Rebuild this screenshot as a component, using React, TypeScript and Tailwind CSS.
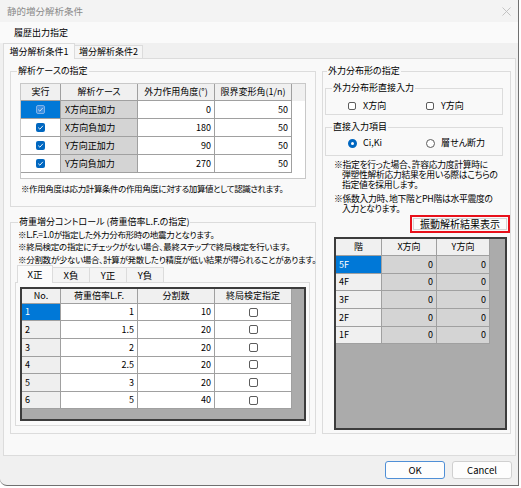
import React from "react";

const Check = ({ sel = false }: { sel?: boolean }) => (
  <div
    className={
      "w-[9px] h-[9px] rounded-[2px] flex items-center justify-center " +
      (sel ? "bg-[#3a8ee0] border border-[#7db3ea]" : "bg-[#0067c0]")
    }
  >
    <svg width="7" height="7" viewBox="0 0 7 7">
      <path d="M1.2 3.6 L2.9 5.2 L5.9 1.8" fill="none" stroke={sel ? "#cfe3f8" : "#ffffff"} strokeWidth="0.9" />
    </svg>
  </div>
);

const Box = ({ size = "w-[9px] h-[9px]" }: { size?: string }) => (
  <div className={size + " rounded-[2px] border border-[#5c5c5c] bg-white"} />
);

const grid1 = [
  ["X方向正加力", "0", "50"],
  ["X方向負加力", "180", "50"],
  ["Y方向正加力", "90", "50"],
  ["Y方向負加力", "270", "50"],
];

const grid2 = [
  ["1", "1", "10"],
  ["2", "1.5", "20"],
  ["3", "2", "20"],
  ["4", "2.5", "20"],
  ["5", "3", "20"],
  ["6", "5", "40"],
];

const floors = ["5F", "4F", "3F", "2F", "1F"];

const cell = "border-r border-b border-[#a0a0a0] flex items-center";

export default function App() {
  return (
    <div className="w-[521px] h-[488px] bg-white font-['Noto_Sans_CJK_JP',sans-serif] [font-feature-settings:'palt'] text-black">
      <div className="w-[519px] h-[486px] bg-[#f0f0f0] border-r border-b border-[#707070] rounded-bl-[7px] flex flex-col text-[9px] overflow-hidden">
        {/* title bar */}
        <div className="h-[22px] shrink-0 bg-[#f3f3f3] flex items-center justify-between pl-[7px] pr-[7px] text-[9.5px] text-[#8a8a8a]">
          <span>静的増分解析条件</span>
          <svg width="9" height="9" viewBox="0 0 9 9">
            <path d="M0.5 0.5 L8.5 8.5 M8.5 0.5 L0.5 8.5" stroke="#bdbdbd" strokeWidth="0.9" />
          </svg>
        </div>
        {/* menu strip */}
        <div className="h-[21px] shrink-0 bg-[#fafafa] flex items-center pl-[14px] leading-[12px]">履歴出力指定</div>
        {/* top tabs */}
        <div className="h-[15px] shrink-0 flex items-end pl-[3px] leading-[12px]">
          <div className="relative z-10 h-[16px] w-[72px] -mb-px bg-[#f9f9f9] border border-b-0 border-[#dcdcdc] flex items-center justify-center">
            増分解析条件1
          </div>
          <div className="h-[13px] w-[68px] bg-[#f5f5f5] border border-b-0 border-l-0 border-[#dcdcdc] flex items-center justify-center">
            増分解析条件2
          </div>
        </div>
        {/* panel */}
        <div className="mx-[3px] h-[398px] w-[513px] shrink-0 bg-[#f9f9f9] border border-[#dcdcdc] flex pl-[6px] pt-[6px]">
          {/* left column */}
          <div className="w-[306px] flex flex-col">
            <fieldset className="w-[306px] h-[142px] min-w-0 border border-[#dcdcdc]">
              <legend className="ml-[6px] px-[1px] leading-[12px]">解析ケースの指定</legend>
              <div className="mt-[6px] ml-[9px] w-[286px] h-[96px] border border-[#c8c8c8] bg-white">
                <div className="flex h-[17px] bg-[#f0f0f0]">
                  <div className={cell + " w-[40px] justify-center"}>実行</div>
                  <div className={cell + " w-[77px] justify-center"}>解析ケース</div>
                  <div className={cell + " w-[77px] justify-center"}>外力作用角度(°)</div>
                  <div className={cell + " w-[77px] justify-center"}>限界変形角(1/n)</div>
                </div>
                {grid1.map((r, i) => (
                  <div key={i} className="flex h-[18px]">
                    <div className={cell + " w-[40px] justify-center " + (i === 0 ? "bg-[#0078d7]" : "bg-white")}>
                      <Check sel={i === 0} />
                    </div>
                    <div className={cell + " w-[77px] pl-[4px] bg-[#d4d4d4]"}>{r[0]}</div>
                    <div className={cell + " w-[77px] justify-end pr-[3px] bg-white"}>{r[1]}</div>
                    <div className={cell + " w-[77px] justify-end pr-[3px] bg-white"}>{r[2]}</div>
                  </div>
                ))}
              </div>
              <div className="mt-[3px] ml-[10px] leading-[12px] text-[8.5px] tracking-[-0.4px] whitespace-nowrap">
                ※作用角度は応力計算条件の作用角度に対する加算値として認識されます。
              </div>
            </fieldset>

            <fieldset className="mt-[9px] w-[306px] h-[218px] min-w-0 border border-[#dcdcdc]">
              <legend className="ml-[7px] px-[1px] leading-[12px]">荷重増分コントロール (荷重倍率L.F.の指定)</legend>
              <div className="ml-[7px] leading-[12.3px] text-[8.5px] tracking-[-0.3px] whitespace-nowrap">
                <div>※L.F.=1.0が指定した外力分布形時の地震力となります。</div>
                <div>※終局検定の指定にチェックがない場合、最終ステップで終局検定を行います。</div>
                <div>※分割数が少ない場合、計算が発散したり精度が低い結果が得られることがあります。</div>
              </div>
              <div className="ml-[6px] h-[17px] flex items-end leading-[12px] text-[9.5px]">
                <div className="relative z-10 h-[18px] w-[36px] -mb-px bg-[#fbfbfb] border border-b-0 border-[#dcdcdc] flex items-center justify-center">
                  X正
                </div>
                {["X負", "Y正", "Y負"].map((t) => (
                  <div key={t} className="h-[15px] w-[37px] bg-[#f4f4f4] border border-b-0 border-l-0 border-[#dcdcdc] flex items-center justify-center">
                    {t}
                  </div>
                ))}
              </div>
              <div className="ml-[4px] w-[295px] h-[144px] border border-[#dcdcdc] bg-[#fbfbfb] p-[4px]">
                <div className="w-[286px] h-[134px] border-2 border-[#3c3c3c] bg-[#ababab]">
                  <div className="flex h-[15px] bg-[#f0f0f0] w-fit">
                    <div className={cell + " w-[39px] justify-center"}>No.</div>
                    <div className={cell + " w-[77px] justify-center"}>荷重倍率L.F.</div>
                    <div className={cell + " w-[77px] justify-center"}>分割数</div>
                    <div className={cell + " w-[77px] justify-center"}>終局検定指定</div>
                  </div>
                  {grid2.map((r, i) => (
                    <div key={i} className="flex h-[17.6px] w-fit">
                      <div className={cell + " w-[39px] pl-[3px] " + (i === 0 ? "bg-[#0078d7] text-white" : "bg-[#efefef]")}>{r[0]}</div>
                      <div className={cell + " w-[77px] justify-end pr-[3px] bg-white"}>{r[1]}</div>
                      <div className={cell + " w-[77px] justify-end pr-[3px] bg-white"}>{r[2]}</div>
                      <div className={cell + " w-[77px] justify-center bg-white"}>
                        <Box />
                      </div>
                    </div>
                  ))}
                </div>
              </div>
            </fieldset>
          </div>

          {/* right group */}
          <fieldset className="ml-[6px] w-[189px] h-[369px] min-w-0 border border-[#dcdcdc]">
            <legend className="ml-[4px] px-[1px] leading-[12px]">外力分布形の指定</legend>
            <fieldset className="mt-[5px] ml-[2px] w-[178px] h-[33px] min-w-0 border border-[#dcdcdc]">
              <legend className="ml-[6px] px-[1px] leading-[12px]">外力分布形直接入力</legend>
              <div className="h-[19px] pt-[4px] flex items-center pl-[22px]">
                <div className="w-[78px] flex items-center gap-[7px]">
                  <Box size="w-[8px] h-[8px]" />
                  <span>X方向</span>
                </div>
                <div className="flex items-center gap-[7px]">
                  <Box size="w-[8px] h-[8px]" />
                  <span>Y方向</span>
                </div>
              </div>
            </fieldset>
            <fieldset className="mt-[6px] ml-[2px] w-[178px] h-[35px] min-w-0 border border-[#dcdcdc]">
              <legend className="ml-[6px] px-[1px] leading-[12px]">直接入力項目</legend>
              <div className="h-[20px] flex items-center pl-[22px]">
                <div className="w-[78px] flex items-center gap-[6px]">
                  <div className="w-[9px] h-[9px] rounded-full border-[3px] border-[#0067c0] bg-white" />
                  <span>Ci,Ki</span>
                </div>
                <div className="flex items-center gap-[6px]">
                  <div className="w-[9px] h-[9px] rounded-full border border-[#5c5c5c] bg-white" />
                  <span>層せん断力</span>
                </div>
              </div>
            </fieldset>
            <div className="mt-[4px] ml-[11px] leading-[10px] text-[8.8px] tracking-[-0.3px] whitespace-nowrap">
              <div>※指定を行った場合、許容応力度計算時に</div>
              <div className="pl-[8px]">弾塑性解析応力結果を用いる際はこちらの</div>
              <div className="pl-[8px]">指定値を採用します。</div>
              <div className="mt-[4px]">※係数入力時、地下階とPH階は水平震度の</div>
              <div className="pl-[8px]">入力となります。</div>
            </div>
            <div className="mt-[1px] ml-[87px] w-[100px] h-[18px] border-2 border-[#e8101a] p-[1px]">
              <div className="h-full border border-[#d4d4d4] bg-[#fbfbfb] flex items-center justify-center text-[10px] leading-[12px]">
                振動解析結果表示
              </div>
            </div>
            <div className="mt-[4px] ml-[11px] w-[173px] h-[193px] border-2 border-[#3c3c3c] bg-[#ababab]">
              <div className="flex h-[17px] bg-[#f0f0f0] w-fit">
                <div className={cell + " w-[46px] justify-center"}>階</div>
                <div className={cell + " w-[55px] justify-center"}>X方向</div>
                <div className={cell + " w-[53px] justify-center"}>Y方向</div>
              </div>
              {floors.map((f, i) => (
                <div key={f} className="flex h-[17.7px] w-fit">
                  <div className={cell + " w-[46px] pl-[3px] " + (i === 0 ? "bg-[#0078d7] text-white" : "bg-[#f0f0f0]")}>{f}</div>
                  <div className={cell + " w-[55px] justify-end pr-[3px] bg-[#d4d4d4]"}>0</div>
                  <div className={cell + " w-[53px] justify-end pr-[3px] bg-[#d4d4d4]"}>0</div>
                </div>
              ))}
            </div>
          </fieldset>
        </div>
        {/* buttons */}
        <div className="mt-[5px] flex justify-end gap-[7px] pr-[6px] text-[9.5px]">
          <div className="w-[60px] h-[18px] rounded-[3px] border border-[#4f8fd6] bg-[#fdfdfd] flex items-center justify-center">OK</div>
          <div className="w-[60px] h-[18px] rounded-[3px] border border-[#d0d0d0] bg-[#fdfdfd] flex items-center justify-center">Cancel</div>
        </div>
      </div>
    </div>
  );
}
